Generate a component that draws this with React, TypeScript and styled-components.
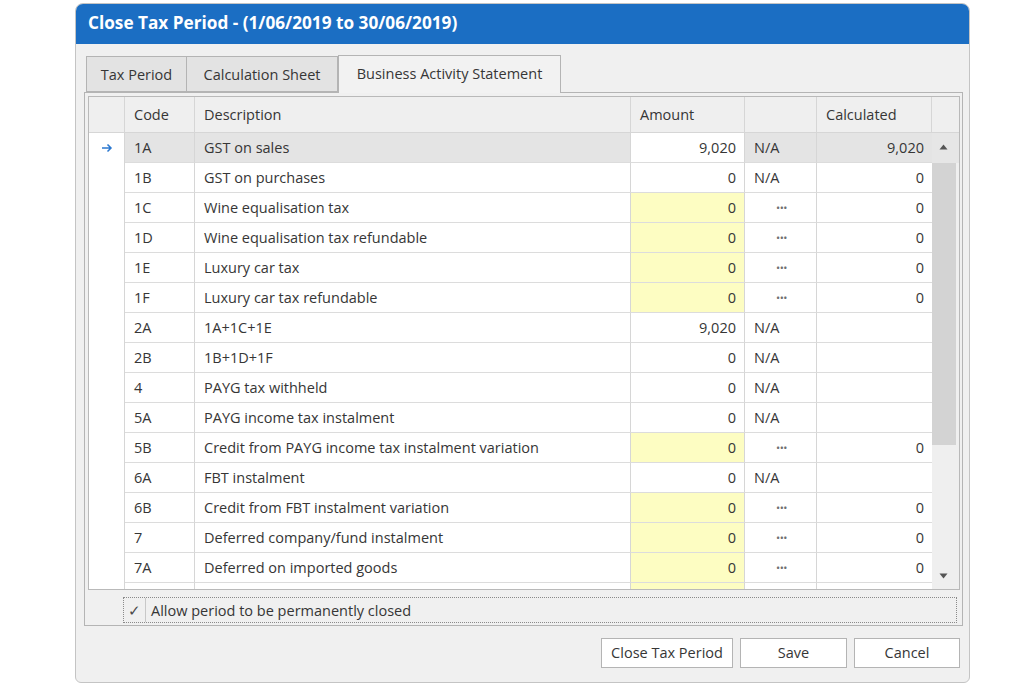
import React from "react";
import styled, { createGlobalStyle, css } from "styled-components";

const Global = createGlobalStyle`
  html, body { margin: 0; padding: 0; background: #ffffff; }
  body { font-family: "Open Sans", "Liberation Sans", sans-serif; color: #363636; }
  * { box-sizing: border-box; }
`;

const Page = styled.div`
  width: 1024px;
  height: 683px;
  padding: 3px 0 0 75px;
`;

const Window = styled.div`
  width: 895px;
  height: 680px;
  border: 1px solid #c4c4c4;
  border-radius: 8px 8px 6px 6px;
  background: #f0f0f0;
  display: flex;
  flex-direction: column;
  overflow: hidden;
`;

const TitleBar = styled.div`
  height: 40px;
  background: #1b6ec3;
  color: #ffffff;
  font-weight: 700;
  font-size: 17.2px;
  display: flex;
  align-items: center;
  padding-left: 12px;
  padding-bottom: 3px;
`;

const Body = styled.div`
  flex: 1;
  display: flex;
  flex-direction: column;
  padding: 10px 6px 0 8px;
`;

const TabStrip = styled.div`
  display: flex;
  align-items: flex-end;
  height: 38px;
  padding-left: 2px;
  position: relative;
  z-index: 1;
`;

const Tab = styled.div<{ $w: number; $active?: boolean }>`
  width: ${(p) => p.$w}px;
  height: ${(p) => (p.$active ? 38 : 36)}px;
  margin-bottom: ${(p) => (p.$active ? -1 : 0)}px;
  border: 1px solid #b4b4b4;
  border-bottom: ${(p) => (p.$active ? "none" : "1px solid #b4b4b4")};
  border-left-width: ${(p) => (p.$active ? 1 : 0)}px;
  background: ${(p) => (p.$active ? "#f2f2f2" : "#e3e3e3")};
  font-size: 14.5px;
  color: #363636;
  display: flex;
  align-items: center;
  justify-content: center;
  padding-bottom: ${(p) => (p.$active ? 2 : 0)}px;
  &:first-child { border-left-width: 1px; }
`;

const TabPage = styled.div`
  width: 879px;
  height: 534px;
  border: 1px solid #b4b4b4;
  padding: 3px 2px 0 3px;
  display: flex;
  flex-direction: column;
`;

const Grid = styled.div`
  width: 872px;
  height: 494px;
  border: 1px solid #b9b9b9;
  background: #ffffff;
  display: flex;
  flex-direction: column;
  overflow: hidden;
`;

const cols = "36px 70px 436px 114px 72px 115px";

const HeaderRow = styled.div`
  display: grid;
  grid-template-columns: ${cols} 27px;
  height: 36px;
  background: #efefef;
`;

const HeadCell = styled.div`
  border-right: 1px solid #d6d6d6;
  border-bottom: 1px solid #d6d6d6;
  font-size: 14.5px;
  display: flex;
  align-items: center;
  padding-left: 9px;
  color: #363636;
  &:last-child { border-right: none; }
`;

const GridBody = styled.div`
  flex: 1;
  display: flex;
  min-height: 0;
`;

const Rows = styled.div`
  width: 843px;
  overflow: hidden;
`;

const Row = styled.div`
  display: grid;
  grid-template-columns: ${cols};
  height: 30px;
`;

type Tone = "plain" | "sel" | "yellow";

const Cell = styled.div<{ $tone?: Tone; $align?: "left" | "right" | "center"; $ind?: boolean }>`
  height: 30px;
  font-size: 14.5px;
  color: #363636;
  display: flex;
  align-items: center;
  white-space: nowrap;
  border-right: 1px solid #d6d6d6;
  border-bottom: 1px solid #dcdcdc;
  padding: 0 8px 1px 9px;
  justify-content: ${(p) =>
    p.$align === "right" ? "flex-end" : p.$align === "center" ? "center" : "flex-start"};
  background: ${(p) =>
    p.$tone === "sel" ? "#e4e4e4" : p.$tone === "yellow" ? "#fdfdc2" : "#ffffff"};
  ${(p) =>
    p.$ind &&
    css`
      border-bottom: none;
      justify-content: center;
      padding: 0;
      color: #2b78d0;
    `}
  &:last-child { border-right: none; }
`;

const Dots = styled.span`
  font-size: 11px;
  color: #707070;
  letter-spacing: -0.5px;
  margin-left: 1px;
`;

const ScrollBar = styled.div`
  width: 27px;
  display: flex;
  flex-direction: column;
  background: #efefef;
`;

const ScrollBtn = styled.div<{ $top?: boolean }>`
  height: 30px;
  display: flex;
  align-items: ${(p) => (p.$top ? "center" : "flex-end")};
  justify-content: center;
  padding-bottom: ${(p) => (p.$top ? 2 : 10)}px;
  padding-right: 4px;
  background: ${(p) => (p.$top ? "#e6e6e6" : "#efefef")};
`;

const Thumb = styled.div`
  height: 282px;
  margin-right: 3px;
  background: #d3d3d3;
`;

const Track = styled.div`
  flex: 1;
`;

const CheckRow = styled.div`
  margin: 7px 3px 0 35px;
  height: 26px;
  border: 1px dotted #8a8a8a;
  display: flex;
  align-items: center;
  font-size: 14.5px;
  color: #363636;
`;

const CheckBox = styled.div`
  width: 22px;
  height: 24px;
  border-right: 1px solid #c8c8c8;
  display: flex;
  align-items: center;
  justify-content: center;
  margin-right: 5px;
  font-size: 15px;
  color: #4a4a4a;
`;

const Buttons = styled.div`
  display: flex;
  justify-content: flex-end;
  gap: 7px;
  padding: 12px 3px 0 0;
`;

const Button = styled.button<{ $w: number }>`
  width: ${(p) => p.$w}px;
  height: 30px;
  border: 1px solid #b4b4b4;
  background: #ffffff;
  font-family: "Open Sans", "Liberation Sans", sans-serif;
  font-size: 14.5px;
  color: #363636;
  padding: 0 0 2px 0;
`;

type RowData = {
  code: string;
  desc: string;
  amount: string;
  yellow?: boolean;
  na?: boolean;
  calc?: string;
};

const rows: RowData[] = [
  { code: "1A", desc: "GST on sales", amount: "9,020", na: true, calc: "9,020" },
  { code: "1B", desc: "GST on purchases", amount: "0", na: true, calc: "0" },
  { code: "1C", desc: "Wine equalisation tax", amount: "0", yellow: true, calc: "0" },
  { code: "1D", desc: "Wine equalisation tax refundable", amount: "0", yellow: true, calc: "0" },
  { code: "1E", desc: "Luxury car tax", amount: "0", yellow: true, calc: "0" },
  { code: "1F", desc: "Luxury car tax refundable", amount: "0", yellow: true, calc: "0" },
  { code: "2A", desc: "1A+1C+1E", amount: "9,020", na: true },
  { code: "2B", desc: "1B+1D+1F", amount: "0", na: true },
  { code: "4", desc: "PAYG tax withheld", amount: "0", na: true },
  { code: "5A", desc: "PAYG income tax instalment", amount: "0", na: true },
  { code: "5B", desc: "Credit from PAYG income tax instalment variation", amount: "0", yellow: true, calc: "0" },
  { code: "6A", desc: "FBT instalment", amount: "0", na: true },
  { code: "6B", desc: "Credit from FBT instalment variation", amount: "0", yellow: true, calc: "0" },
  { code: "7", desc: "Deferred company/fund instalment", amount: "0", yellow: true, calc: "0" },
  { code: "7A", desc: "Deferred on imported goods", amount: "0", yellow: true, calc: "0" },
  { code: "", desc: "", amount: "", yellow: true, calc: "" },
];

const Arrow = () => (
  <svg width="12" height="10" viewBox="0 0 12 10">
    <path d="M1 5h9M6.5 1.5L10 5l-3.5 3.5" fill="none" stroke="#2b78d0" strokeWidth="1.5" />
  </svg>
);

const Tri = ({ up }: { up?: boolean }) => (
  <svg width="9" height="6" viewBox="0 0 9 6">
    <path d={up ? "M0.5 5.5L4.5 0.5L8.5 5.5Z" : "M0.5 0.5L4.5 5.5L8.5 0.5Z"} fill="#555" />
  </svg>
);

export default function App() {
  return (
    <>
      <Global />
      <Page>
        <Window>
          <TitleBar>Close Tax Period - (1/06/2019 to 30/06/2019)</TitleBar>
          <Body>
            <TabStrip>
              <Tab $w={101}>Tax Period</Tab>
              <Tab $w={151}>Calculation Sheet</Tab>
              <Tab $w={223} $active>
                Business Activity Statement
              </Tab>
            </TabStrip>
            <TabPage>
              <Grid>
                <HeaderRow>
                  <HeadCell />
                  <HeadCell>Code</HeadCell>
                  <HeadCell>Description</HeadCell>
                  <HeadCell>Amount</HeadCell>
                  <HeadCell />
                  <HeadCell>Calculated</HeadCell>
                  <HeadCell />
                </HeaderRow>
                <GridBody>
                  <Rows>
                    {rows.map((r, i) => {
                      const sel = i === 0;
                      const tone: Tone = sel ? "sel" : "plain";
                      return (
                        <Row key={i}>
                          <Cell $ind>{sel ? <Arrow /> : null}</Cell>
                          <Cell $tone={tone}>{r.code}</Cell>
                          <Cell $tone={tone}>{r.desc}</Cell>
                          <Cell $tone={r.yellow ? "yellow" : "plain"} $align="right">
                            {r.amount}
                          </Cell>
                          {r.na ? (
                            <Cell $tone={tone}>N/A</Cell>
                          ) : (
                            <Cell $tone={tone} $align="center">
                              {r.code ? <Dots>•••</Dots> : null}
                            </Cell>
                          )}
                          <Cell $tone={tone} $align="right">
                            {r.calc ?? ""}
                          </Cell>
                        </Row>
                      );
                    })}
                  </Rows>
                  <ScrollBar>
                    <ScrollBtn $top>
                      <Tri up />
                    </ScrollBtn>
                    <Thumb />
                    <Track />
                    <ScrollBtn>
                      <Tri />
                    </ScrollBtn>
                  </ScrollBar>
                </GridBody>
              </Grid>
              <CheckRow>
                <CheckBox>✓</CheckBox>
                Allow period to be permanently closed
              </CheckRow>
            </TabPage>
            <Buttons>
              <Button $w={132}>Close Tax Period</Button>
              <Button $w={107}>Save</Button>
              <Button $w={106}>Cancel</Button>
            </Buttons>
          </Body>
        </Window>
      </Page>
    </>
  );
}
